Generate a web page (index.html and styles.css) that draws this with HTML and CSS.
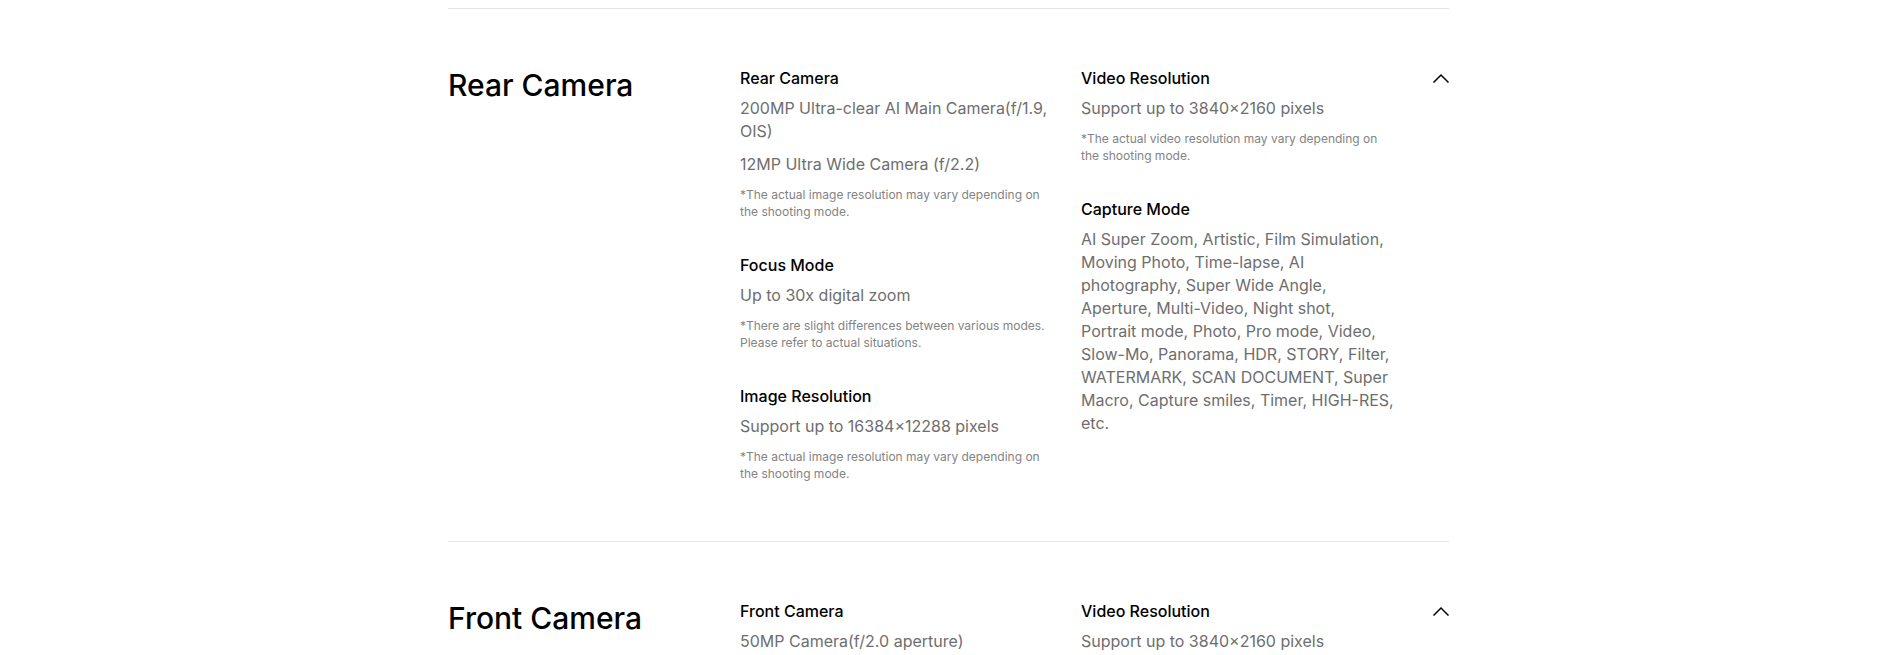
FILE: index.html
```html
<!DOCTYPE html>
<html lang="en">
<head>
<meta charset="utf-8">
<title>Specs</title>
<link rel="stylesheet" href="styles.css">
</head>
<body>
<main class="specs">
  <section class="spec-section">
    <h2 class="spec-title">Rear Camera</h2>
    <div class="spec-col">
      <div class="spec-item">
        <h3 class="item-title">Rear Camera</h3>
        <p class="item-text">200MP Ultra-clear AI Main Camera(f/1.9, OIS)</p>
        <p class="item-text">12MP Ultra Wide Camera (f/2.2)</p>
        <p class="item-note">*The actual image resolution may vary depending on the shooting mode.</p>
      </div>
      <div class="spec-item">
        <h3 class="item-title">Focus Mode</h3>
        <p class="item-text">Up to 30x digital zoom</p>
        <p class="item-note">*There are slight differences between various modes. Please refer to actual situations.</p>
      </div>
      <div class="spec-item">
        <h3 class="item-title">Image Resolution</h3>
        <p class="item-text">Support up to 16384×12288 pixels</p>
        <p class="item-note">*The actual image resolution may vary depending on the shooting mode.</p>
      </div>
    </div>
    <div class="spec-col">
      <div class="spec-item">
        <h3 class="item-title">Video Resolution</h3>
        <p class="item-text">Support up to 3840×2160 pixels</p>
        <p class="item-note">*The actual video resolution may vary depending on the shooting mode.</p>
      </div>
      <div class="spec-item">
        <h3 class="item-title">Capture Mode</h3>
        <p class="item-text">AI Super Zoom, Artistic, Film Simulation, Moving Photo, Time-lapse, AI photography, Super Wide Angle, Aperture, Multi-Video, Night shot, Portrait&nbsp;mode, Photo, Pro mode, Video, Slow-Mo, Panorama, HDR, STORY, Filter, WATERMARK, SCAN DOCUMENT, Super Macro, Capture smiles, Timer, HIGH-RES, etc.</p>
      </div>
    </div>
    <button class="toggle" type="button" aria-label="Collapse">
      <svg class="chevron" width="16" height="10" viewBox="0 0 16 10" fill="none"><path d="M1 9 L8 2 L15 9" stroke="#000" stroke-width="1.5" stroke-linecap="square" stroke-linejoin="miter"/></svg>
    </button>
  </section>

  <section class="spec-section">
    <h2 class="spec-title">Front Camera</h2>
    <div class="spec-col">
      <div class="spec-item">
        <h3 class="item-title">Front Camera</h3>
        <p class="item-text">50MP Camera(f/2.0 aperture)</p>
        <p class="item-note">*The actual image resolution may vary depending on the shooting mode.</p>
      </div>
    </div>
    <div class="spec-col">
      <div class="spec-item">
        <h3 class="item-title">Video Resolution</h3>
        <p class="item-text">Support up to 3840×2160 pixels</p>
        <p class="item-note">*The actual video resolution may vary depending on the shooting mode.</p>
      </div>
    </div>
    <button class="toggle" type="button" aria-label="Collapse">
      <svg class="chevron" width="16" height="10" viewBox="0 0 16 10" fill="none"><path d="M1 9 L8 2 L15 9" stroke="#000" stroke-width="1.5" stroke-linecap="square" stroke-linejoin="miter"/></svg>
    </button>
  </section>
</main>
</body>
</html>
```
FILE: styles.css
```css
html, body {
  margin: 0;
  padding: 0;
  background: #fff;
}

body {
  font-family: "Inter", "Noto Sans", sans-serif;
  color: #000;
  padding-top: 8px;
}

.specs {
  width: 1001px;
  margin: 0 auto;
}

.spec-section {
  display: grid;
  grid-template-columns: 267px 316px 316px 1fr;
  column-gap: 25px;
  align-items: start;
  border-top: 1px solid #e6e6e6;
  padding: 58px 0 59px;
}

.spec-title {
  margin: 0;
  font-size: 30px;
  line-height: 36px;
  font-weight: 500;
  letter-spacing: 0;
}

.spec-col {
  display: flex;
  flex-direction: column;
  gap: 34px;
}

.item-title {
  margin: 0 0 8px;
  font-size: 16px;
  line-height: 22px;
  font-weight: 500;
}

.item-text {
  margin: 0;
  font-size: 16px;
  line-height: 23px;
  color: #6e6e6e;
}

.item-text + .item-text {
  margin-top: 10px;
}

.item-note {
  margin: 10px 0 0;
  font-size: 12px;
  line-height: 17px;
  color: #838383;
}

.toggle {
  justify-self: end;
  margin: 6px 0 0;
  padding: 0;
  border: 0;
  background: none;
  line-height: 0;
  cursor: pointer;
}
```
